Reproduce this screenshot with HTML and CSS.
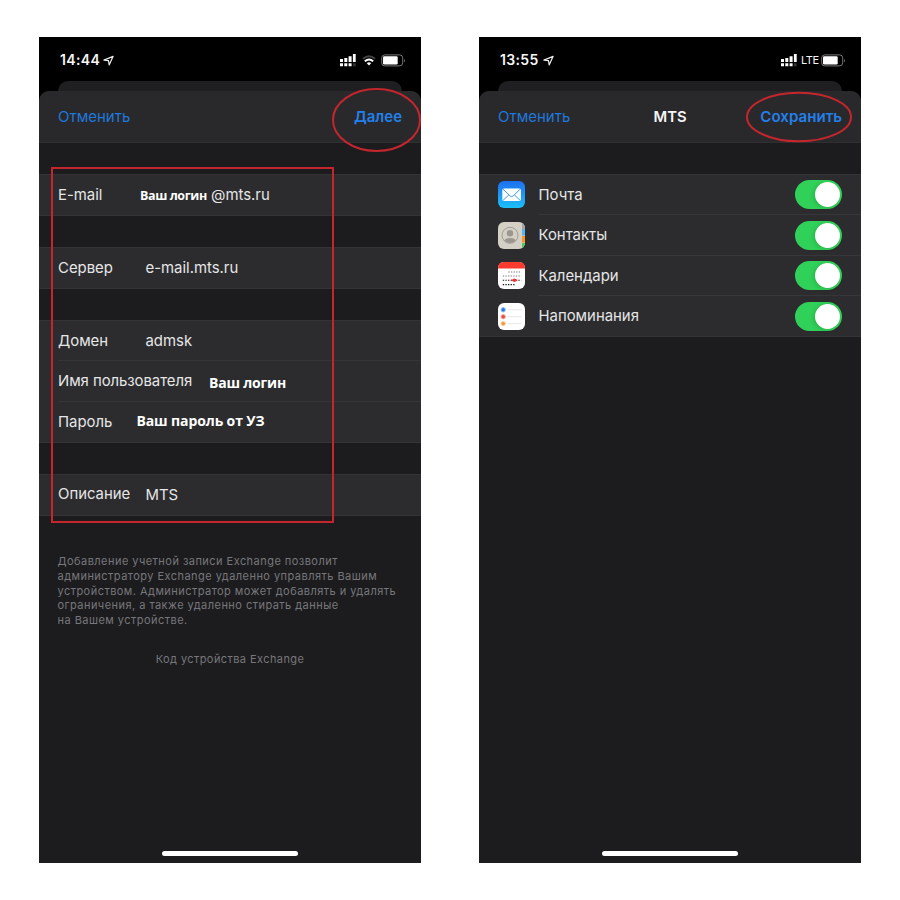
FILE: index.html
```html
<!DOCTYPE html>
<html lang="ru">
<head>
<meta charset="utf-8">
<title>MTS Exchange</title>
<link rel="stylesheet" href="styles.css">
</head>
<body>
<main class="stage">
  <section class="phone">
    <header class="status">
      <span class="time">14:44</span>
      <svg class="loc" viewBox="0 0 10 10"><path d="M.8 4.7 9.2 1.2 5.6 9 5 5.2Z"/></svg>
      <span class="spacer"></span>
      <svg class="signal" viewBox="0 0 16 13"><path d="M0 5h3v3H0zM4.3 4h3v4h-3zM8.6 2.3h3V8h-3zM12.9 0h2.8v8h-2.8zM0 9.3h3v3H0zM4.3 9.3h3v3h-3zM8.6 9.3h3v3h-3z"/><path class="dim" d="M12.9 9.3h2.8v3h-2.8z"/></svg>
      <svg class="wifi" viewBox="0 0 14 11"><path class="arc dim-arc" d="M1 3.7Q7-1.1 13 3.7"/><path class="arc" d="M2.8 6.2Q7 2.6 11.2 6.2"/><path d="M4.8 8.2Q7 6.5 9.2 8.2L7 10.5Z"/></svg>
      <svg class="battery" viewBox="0 0 25 13"><rect class="shell" x=".7" y=".9" width="21" height="11" rx="3"/><rect x="2" y="2.3" width="14.7" height="8.2" rx="1.2"/><path class="cap" d="M23 4.5q1.6 2 0 4z"/></svg>
    </header>
    <div class="back-sheet"></div>
    <div class="sheet">
      <nav class="nav">
        <span class="cancel">Отменить</span>
        <span class="action next">Далее</span>
        <svg class="ring ring-next" viewBox="0 0 89 64"><ellipse cx="44.5" cy="32" rx="43.5" ry="31"/></svg>
      </nav>
      <div class="group">
        <div class="row"><span class="label l-email">E-mail</span><span class="hand small">Ваш логин</span><span class="value v-mail">@mts.ru</span></div>
      </div>
      <div class="group">
        <div class="row"><span class="label l-server">Сервер</span><span class="value v-server">e-mail.mts.ru</span></div>
      </div>
      <div class="group accounts">
        <div class="row"><span class="label l-domain">Домен</span><span class="value v-domain">admsk</span></div>
        <div class="row lined"><span class="label l-user">Имя пользователя</span><span class="hand user">Ваш логин</span></div>
        <div class="row lined"><span class="label l-pass">Пароль</span><span class="hand pass">Ваш пароль от УЗ</span></div>
      </div>
      <div class="group last">
        <div class="row"><span class="label l-desc">Описание</span><span class="value v-desc">MTS</span></div>
      </div>
      <p class="note">Добавление учетной записи Exchange позволит<br>администратору Exchange удаленно управлять Вашим<br>устройством. Администратор может добавлять и удалять<br>ограничения, а также удаленно стирать данные<br>на Вашем устройстве.</p>
      <p class="code">Код устройства Exchange</p>
      <div class="frame"></div>
    </div>
    <div class="home"></div>
  </section>

  <section class="phone second">
    <header class="status">
      <span class="time">13:55</span>
      <svg class="loc" viewBox="0 0 10 10"><path d="M.8 4.7 9.2 1.2 5.6 9 5 5.2Z"/></svg>
      <span class="spacer"></span>
      <svg class="signal" viewBox="0 0 16 13"><path d="M0 5h3v3H0zM4.3 4h3v4h-3zM8.6 2.3h3V8h-3zM12.9 0h2.8v8h-2.8zM0 9.3h3v3H0zM4.3 9.3h3v3h-3zM8.6 9.3h3v3h-3z"/><path class="dim" d="M12.9 9.3h2.8v3h-2.8z"/></svg>
      <span class="lte">LTE</span>
      <svg class="battery" viewBox="0 0 25 13"><rect class="shell" x=".7" y=".9" width="21" height="11" rx="3"/><rect x="2" y="2.3" width="14.7" height="8.2" rx="1.2"/><path class="cap" d="M23 4.5q1.6 2 0 4z"/></svg>
    </header>
    <div class="back-sheet"></div>
    <div class="sheet">
      <nav class="nav">
        <span class="cancel">Отменить</span>
        <span class="title">MTS</span>
        <span class="action save">Сохранить</span>
        <svg class="ring ring-save" viewBox="0 0 106 52"><ellipse cx="53" cy="26" rx="52" ry="24.3"/></svg>
      </nav>
      <div class="group apps">
        <div class="row app">
          <svg class="icon" viewBox="0 0 27 27"><defs><linearGradient id="sky" x2="0" y2="1"><stop stop-color="#1f70ef"/><stop offset="1" stop-color="#1cc0fa"/></linearGradient></defs><rect width="27" height="27" rx="6" fill="url(#sky)"/><rect x="4.3" y="7.5" width="18.6" height="12.6" rx="1.6" fill="#fff"/><path d="m4.8 8 7.3 7q1.5 1.3 3 0l7.3-7M4.8 19.6l6-5.7M22.4 19.6l-6-5.7" fill="none" stroke="#2a8fe9" stroke-width=".9"/></svg>
          <span class="name n-mail">Почта</span><span class="toggle"></span>
        </div>
        <div class="row app">
          <svg class="icon" viewBox="0 0 27 27"><defs><clipPath id="tile"><rect width="27" height="27" rx="6"/></clipPath></defs><g clip-path="url(#tile)"><path fill="#d5d0c6" d="M0 0h27v27H0z"/><path fill="#a4a39f" d="M24 0h3v7h-3z"/><path fill="#55b7ef" d="M24 7h3v6.5h-3z"/><path fill="#f7961e" d="M24 14h3v6.5h-3z"/><path fill="#4ccc5b" d="M24 21h3v6h-3z"/></g><circle cx="12" cy="13.3" r="8" fill="none" stroke="#9c978e" stroke-width=".9"/><circle cx="12" cy="11.2" r="3.2" fill="#9c978e"/><path d="M6.1 18.2q1.8-2.1 5.9-2.1t5.9 2.1q-2.4 2.7-5.9 2.7t-5.9-2.7z" fill="#9c978e"/></svg>
          <span class="name n-contacts">Контакты</span><span class="toggle"></span>
        </div>
        <div class="row app">
          <svg class="icon" viewBox="0 0 27 27"><rect width="27" height="27" rx="6" fill="#fff"/><path d="M0 6.4V6q0-6 6-6h15q6 0 6 6v.4z" fill="#fb3b30"/><g stroke="#444" stroke-width="1.1" fill="none" stroke-dasharray="1.3 1.3"><path d="M10.4 10h12.8" stroke="#777"/><path d="M4.8 14h18.4" stroke="#777"/><path d="M4.8 18.3h18.4" stroke="#111"/><path d="M4.8 22.6h12.4" stroke="#111"/></g><path d="M13.3 18.3h6" stroke="#e83a38" stroke-width="1.6"/><circle cx="16.4" cy="18.3" r="1.8" fill="#e83a38"/></svg>
          <span class="name n-calendar">Календари</span><span class="toggle"></span>
        </div>
        <div class="row app">
          <svg class="icon" viewBox="0 0 27 27"><rect width="27" height="27" rx="6" fill="#fff"/><path d="M9.7 6.8h14M9.7 13.7h14M9.7 20.6h14" stroke="#dedee0" stroke-width=".7"/><g stroke-width="1"><g fill="#2479e8" stroke="#9bc5f7"><circle cx="5.2" cy="6.8" r="2.2"/></g><g fill="#e74b43" stroke="#f6b0ab"><circle cx="5.2" cy="13.7" r="2.2"/></g><g fill="#f49a36" stroke="#fbd5a9"><circle cx="5.2" cy="20.6" r="2.2"/></g></g></svg>
          <span class="name n-reminders">Напоминания</span><span class="toggle"></span>
        </div>
      </div>
    </div>
    <div class="home"></div>
  </section>
</main>
</body>
</html>
```
FILE: styles.css
```css
* { box-sizing: border-box; }
body { margin: 0; background: #fff; font-family: Inter, "Liberation Sans", sans-serif; }
.stage { display: flex; gap: 58px; width: 900px; height: 900px; padding: 37px 39px; }
.phone { position: relative; display: flex; flex-direction: column; width: 382px; height: 826px; background: #000; overflow: hidden; }
.status { display: flex; align-items: center; height: 44px; padding: 2px 15px 0 21px; color: #f5f5f5; }
.time { font-size: 14px; font-weight: 600; letter-spacing: .35px; width: 43px; padding-bottom: 1px; white-space: nowrap; }
.spacer { flex: 1; }
.status svg { fill: #fff; flex: none; }
.loc { width: 11px; height: 11px; }
.status .loc { fill: none; stroke: #eee; stroke-width: 1.1; stroke-linejoin: round; }
.signal { width: 16px; height: 13px; margin-right: 6px; }
.status .dim { fill: #333; }
.wifi { width: 14px; height: 11px; margin-right: 5px; }
.wifi .arc { fill: none; stroke: #fff; stroke-width: 1.9; }
.wifi .dim-arc { stroke: #444; }
.battery { width: 25px; height: 13px; }
.status .shell { fill: none; stroke: #777; stroke-width: 1; }
.status .cap { fill: #777; }
.lte { width: 20px; margin-left: -2px; padding-bottom: 1px; font-size: 11px; letter-spacing: -.4px; }
.back-sheet { height: 10px; margin: 0 19px; border-radius: 10px 10px 0 0; background: #1f1f21; }
.sheet { position: relative; flex: 1; background: #1c1c1e; border-radius: 10px 10px 0 0; }
.nav { position: relative; display: flex; align-items: center; justify-content: space-between; height: 52px; padding: 0 19px; background: #29292b; border-bottom: 1px solid #303032; border-radius: 10px 10px 0 0; font-size: 15px; white-space: nowrap; }
.cancel { color: #1f78dc; }
.action { color: #2380ea; font-weight: 600; }
.save { font-size: 15.1px; }
.title { position: absolute; left: 174.5px; color: #f5f5f5; font-size: 14.8px; font-weight: 600; }
.ring { position: absolute; fill: none; stroke: #c5262e; stroke-width: 2; }
.ring-next { left: 293px; top: -3px; width: 89px; height: 64px; }
.ring-save { left: 267px; top: 0; width: 106px; height: 52px; }
.group { margin-top: 31px; background: #2c2c2e; border-top: 1px solid #343436; border-bottom: 1px solid #343436; }
.row { position: relative; display: flex; align-items: center; height: 40px; padding: 0 0 1px 19px; color: #e6e6e7; font-size: 14.9px; white-space: nowrap; }
.accounts .row:first-child { height: 39px; padding-bottom: 0; }
.group .lined { height: 41px; padding-bottom: 1px; background: linear-gradient(#353537, #353537) 19px 0 / 363px 1px no-repeat; }
.last .row { height: 39.5px; padding-bottom: 1px; }
.label { flex: none; width: 87.5px; }
.l-email { width: 82px; }
.l-user { width: 151px; padding-top: 1px; letter-spacing: -.05px; }
.l-pass { width: 78.5px; padding-top: 1px; }
.value { padding-top: 1px; }
.v-mail { padding-top: 0; }
.hand { color: #fff; font-family: "Open Sans", "Noto Sans", sans-serif; font-weight: 700; }
.hand.small { width: 71px; padding-top: 1px; font-size: 12.5px; letter-spacing: -.4px; }
.hand.user { padding-top: 4px; font-size: 14px; letter-spacing: -.2px; }
.hand.pass { padding-bottom: 1px; font-size: 14px; letter-spacing: -.12px; }
.note { margin: 38.5px 18px 0 18.5px; color: #77777b; font-size: 11px; letter-spacing: .46px; line-height: 14.8px; white-space: nowrap; }
.code { margin: 24px 0 0; color: #77777b; font-size: 11px; letter-spacing: .42px; line-height: 15px; text-align: center; }
.frame { position: absolute; left: 12px; top: 76px; width: 283px; height: 356px; border: 2px solid #c5262e; }
.home { position: absolute; left: 123px; bottom: 7.5px; width: 136px; height: 5px; border-radius: 3px; background: #fff; }
.group .app { height: 40.6px; padding: 2px 19px 0 18.5px; }
.apps .app:first-child { height: 39px; padding-top: 0; }
.app + .app { background: linear-gradient(#373739, #373739) 59px 0 / 323px 1px no-repeat; }
.icon { width: 27px; height: 27px; margin-right: 14px; }
.name { flex: 1; }
.toggle { width: 47px; height: 29px; padding: 2px; border-radius: 15px; background: #30d158; }
.toggle::after { content: ""; display: block; width: 25px; height: 25px; margin-left: auto; border-radius: 50%; background: #fff; box-shadow: -2px 1px 4px #0002; }
```
